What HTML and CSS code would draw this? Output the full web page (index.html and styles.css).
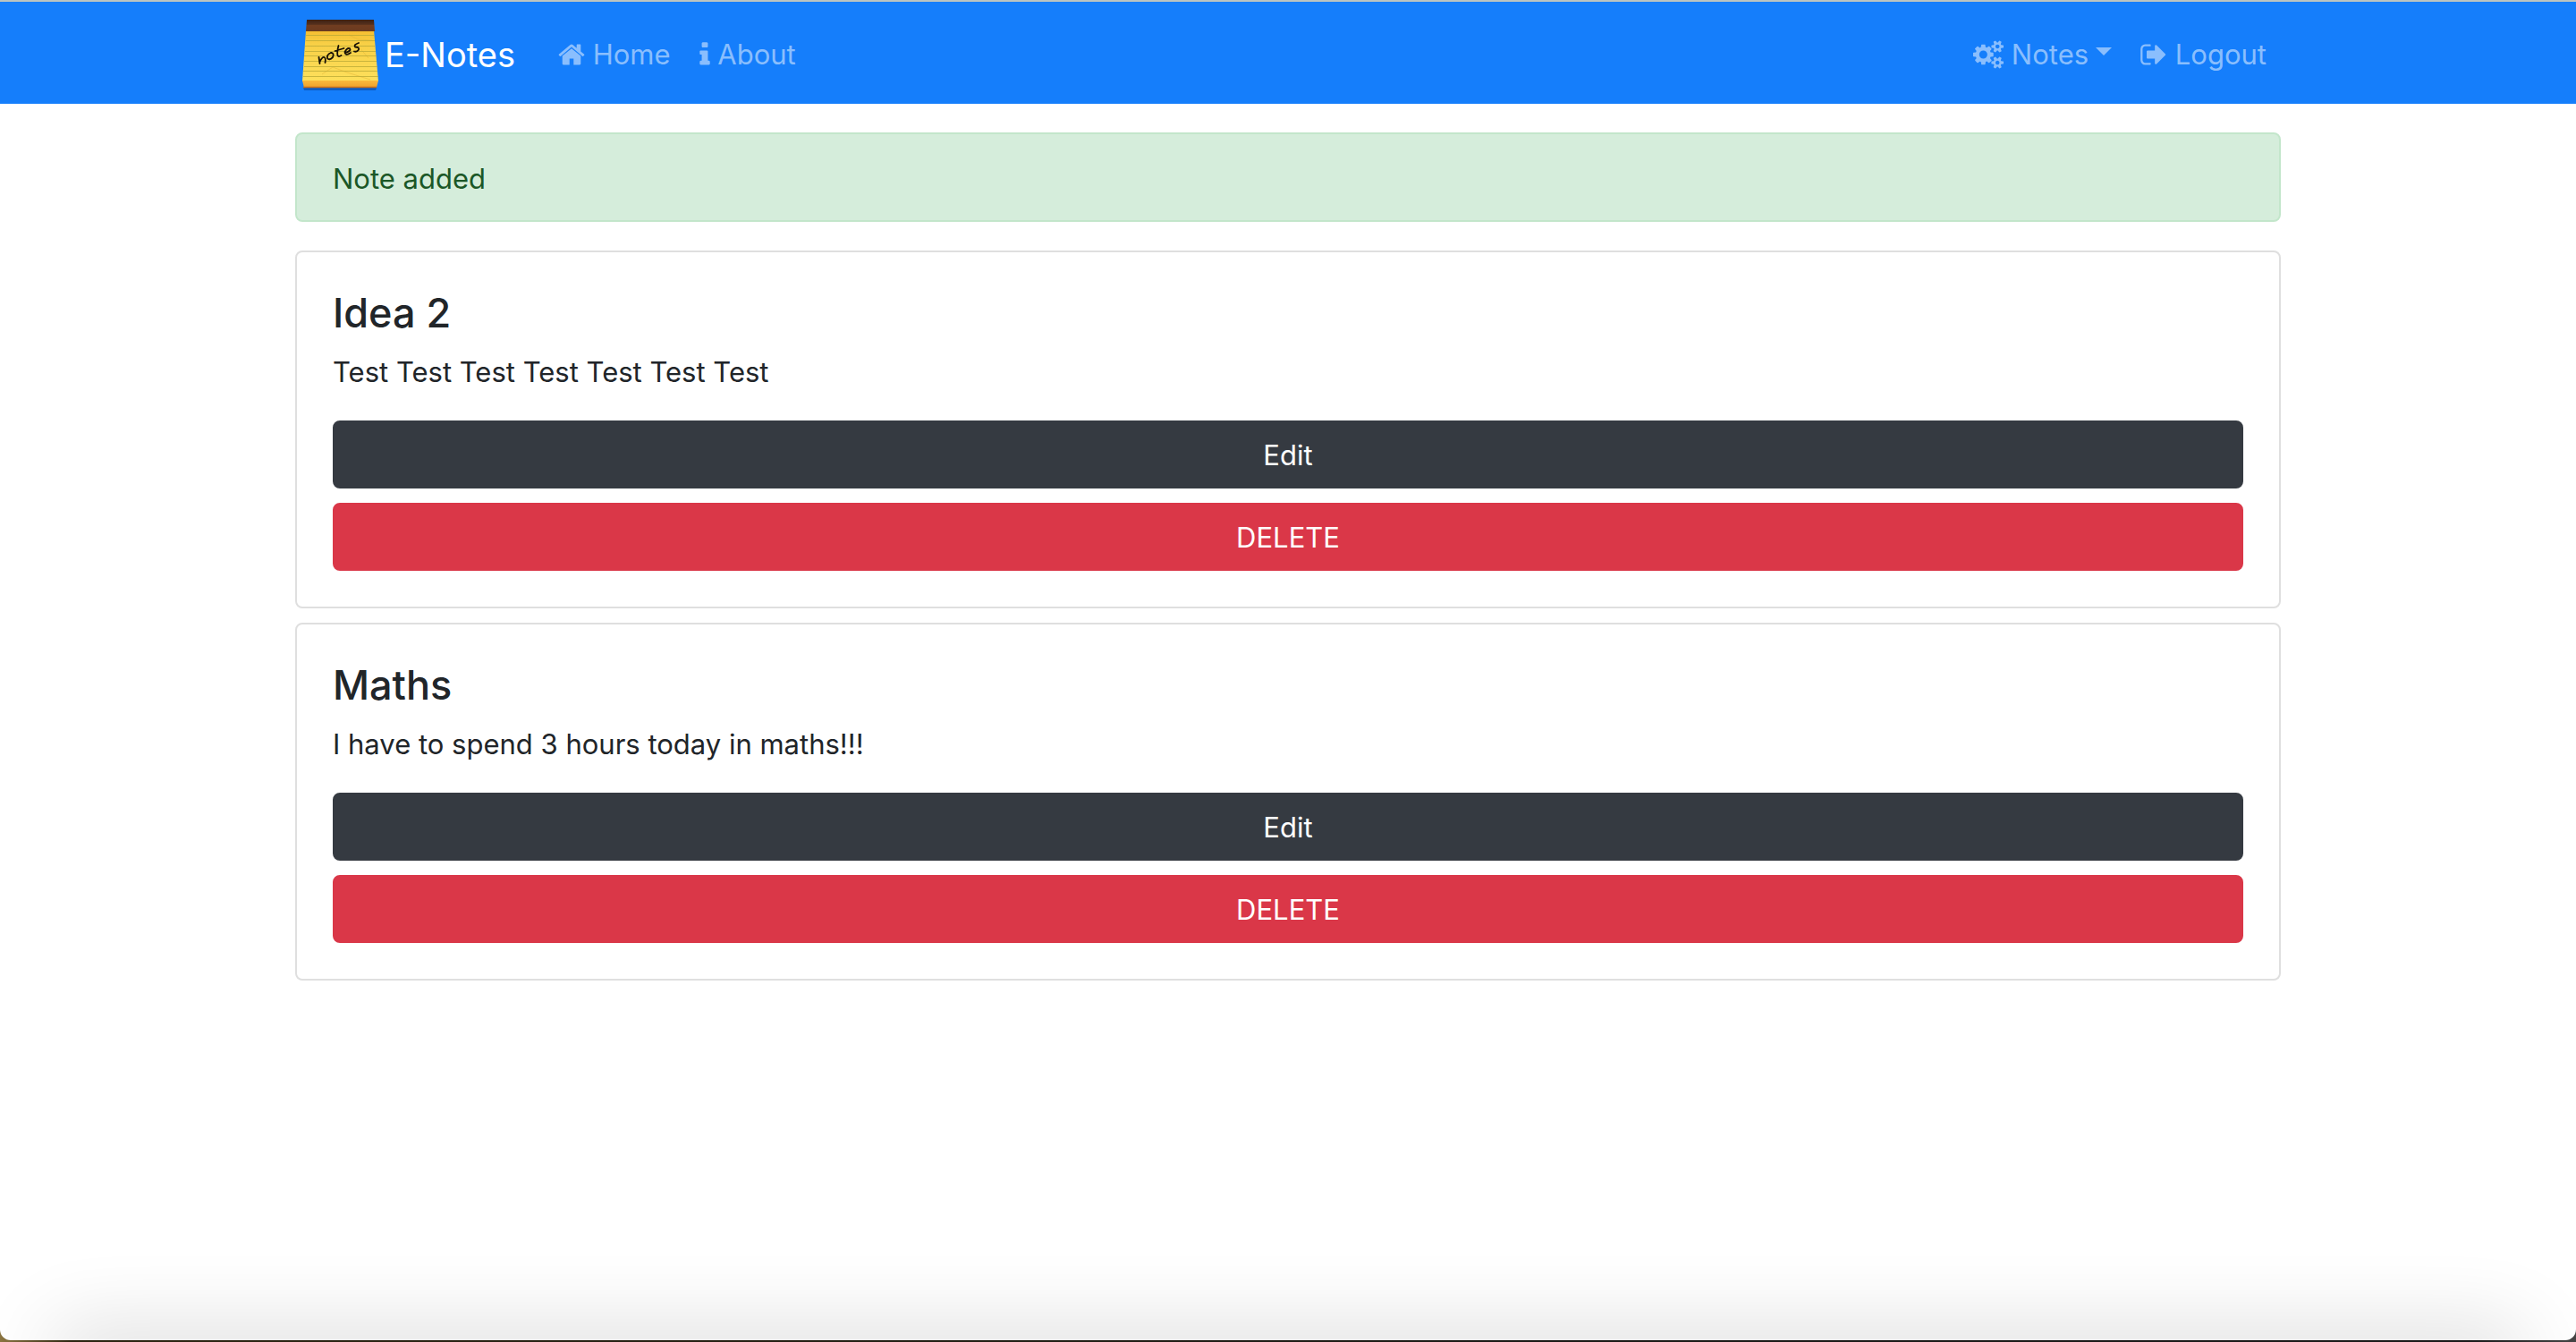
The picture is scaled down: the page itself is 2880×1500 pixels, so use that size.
FILE: index.html
```html
<!DOCTYPE html>
<html lang="en">
<head>
<meta charset="utf-8">
<title>E-Notes</title>
<meta name="viewport" content="width=device-width, initial-scale=1">
<link rel="stylesheet" href="styles.css">
</head>
<body>
<div class="window">
  <header class="navbar">
    <nav class="container nav-row" aria-label="Main">
      <a class="brand" href="#">
        <svg class="brand-logo" viewBox="0 0 100 80" aria-hidden="true">
          <defs>
            <linearGradient id="paper" x1="0" y1="0" x2="0" y2="1">
              <stop offset="0" stop-color="#f5bd30"/>
              <stop offset=".25" stop-color="#f8cf45"/>
              <stop offset="1" stop-color="#fde05c"/>
            </linearGradient>
            <linearGradient id="binding" x1="0" y1="0" x2="0" y2="1">
              <stop offset="0" stop-color="#3a2015"/>
              <stop offset=".4" stop-color="#56301b"/>
              <stop offset=".5" stop-color="#713d20"/>
              <stop offset="1" stop-color="#6a3a20"/>
            </linearGradient>
            <linearGradient id="pad" x1="0" y1="0" x2="0" y2="1">
              <stop offset="0" stop-color="#f9b93c"/>
              <stop offset="1" stop-color="#eda02b"/>
            </linearGradient>
          </defs>
          <path d="M9 77h82l-1 3H10z" fill="#0a4fa8" opacity=".7"/>
          <path d="M12 13h76l5 57H8z" fill="url(#paper)"/>
          <path d="M60 18l10 5 16 1M30 62l12-8 16 6 26 8M70 30l12 14" fill="none" stroke="#e3b436" stroke-width="1" opacity=".5"/>
          <path d="M12 18.500h76M12 24.500h77M11 30.500h78M11 36.500h79M10 41.500h81M10 47.500h81M10 53.500h82M9 58.500h83M9 64.500h84" stroke="#b9a936" stroke-width="1" opacity=".75"/>
          <path d="M8 69h85l-2 8H10z" fill="url(#pad)"/>
          <path d="M9 76.500h82" stroke="#c8701c" stroke-width="1.500"/>
          <path d="M13 1h75l1 13H12z" fill="url(#binding)"/>
          <g fill="none" stroke="#171005" stroke-width="1.800" stroke-linecap="round" stroke-linejoin="round">
            <path d="M26.500 43l1 7M27.500 48q3-6 5-5 2 1 1 6"/>
            <path d="M40 38q-5 2-4 6 2 3 6-1 2-5-2-5"/>
            <path d="M48.500 30q-2 7-1 11 1 2 4 0M44.500 36l10-3"/>
            <path d="M56 38q7-2 5-5-3-1-5.500 4 .5 5 6.500 1"/>
            <path d="M71 27q-6 2-4 4.500 5 0 4 3-2 3-5 2"/>
          </g>
        </svg>E-Notes</a>
      <ul class="nav-list">
        <li><a class="nav-link" href="#"><svg class="icon icon-30" viewBox="64 0 1664 1792" aria-hidden="true"><path d="M1472 992v480q0 26-19 45t-45 19h-384v-384h-256v384h-384q-26 0-45-19t-19-45v-480q0-1 .5-3t.5-3l575-474 575 474q1 2 1 6zm223-69l-62 74q-8 9-21 11h-3q-13 0-21-7l-692-577-692 577q-12 8-24 7-13-2-21-11l-62-74q-8-10-7-23.500t11-21.500l719-599q32-26 76-26t76 26l244 204v-195q0-14 9-23t23-9h192q14 0 23 9t9 23v408l219 182q10 8 11 21.500t-7 23.500z"/></svg> Home</a></li>
        <li><a class="nav-link" href="#"><svg class="icon icon-12" viewBox="576 0 640 1792" aria-hidden="true"><path d="M1216 1344v128q0 26-19 45t-45 19h-512q-26 0-45-19t-19-45v-128q0-26 19-45t45-19h64v-384h-64q-26 0-45-19t-19-45v-128q0-26 19-45t45-19h384q26 0 45 19t19 45v576h64q26 0 45 19t19 45zm-128-1152v192q0 26-19 45t-45 19h-256q-26 0-45-19t-19-45v-192q0-26 19-45t45-19h256q26 0 45 19t19 45z"/></svg> About</a></li>
      </ul>
      <ul class="nav-list nav-end">
        <li><a class="nav-link nav-dropdown" href="#" aria-haspopup="true"><svg class="icon icon-34" viewBox="-64 0 1920 1792" aria-hidden="true"><path d="M832 896q0-106-75-181t-181-75-181 75-75 181 75 181 181 75 181-75 75-181zm768 512q0-52-38-90t-90-38-90 38-38 90q0 53 37.500 90.500t90.500 37.500 90.500-37.500 37.500-90.500zm0-1024q0-52-38-90t-90-38-90 38-38 90q0 53 37.500 90.500t90.500 37.500 90.500-37.500 37.500-90.500zm-384 421v185q0 10-7 19.500t-16 10.500l-155 24q-11 35-32 76 34 48 90 115 7 11 7 20 0 12-7 19-23 30-82.500 89.500t-78.500 59.500q-11 0-21-7l-115-90q-37 19-77 31-11 108-23 155-7 24-30 24h-186q-11 0-20-7.500t-10-17.500l-23-153q-34-10-75-31l-118 89q-7 7-20 7-11 0-21-8-144-133-144-160 0-9 7-19 10-14 41-53t47-61q-23-44-35-82l-152-24q-10-1-17-9.500t-7-19.500v-185q0-10 7-19.500t16-10.500l155-24q11-35 32-76-34-48-90-115-7-11-7-20 0-12 7-20 22-30 82-89t79-59q11 0 21 7l115 90q34-18 77-32 11-108 23-154 7-24 30-24h186q11 0 20 7.500t10 17.500l23 153q34 10 75 31l118-89q8-7 20-7 11 0 21 8 144 133 144 160 0 8-7 19-12 16-42 54t-45 60q23 48 34 82l152 23q10 2 17 10.500t7 19.500zm640 533v140q0 16-149 31-12 27-30 52 51 113 51 138 0 4-4 7-122 71-124 71-8 0-46-47t-52-68q-20 2-30 2t-30-2q-14 21-52 68t-46 47q-2 0-124-71-4-3-4-7 0-25 51-138-18-25-30-52-149-15-149-31v-140q0-16 149-31 13-29 30-52-51-113-51-138 0-4 4-7 4-2 35-20t59-34 30-16q8 0 46 46.500t52 67.500q20-2 30-2t30 2q51-71 92-112l6-2q4 0 124 70 4 3 4 7 0 25-51 138 17 23 30 52 149 15 149 31zm0-1024v140q0 16-149 31-12 27-30 52 51 113 51 138 0 4-4 7-122 71-124 71-8 0-46-47t-52-68q-20 2-30 2t-30-2q-14 21-52 68t-46 47q-2 0-124-71-4-3-4-7 0-25 51-138-18-25-30-52-149-15-149-31v-140q0-16 149-31 13-29 30-52-51-113-51-138 0-4 4-7 4-2 35-20t59-34 30-16q8 0 46 46.500t52 67.500q20-2 30-2t30 2q51-71 92-112l6-2q4 0 124 70 4 3 4 7 0 25-51 138 17 23 30 52 149 15 149 31z"/></svg> Notes</a></li>
        <li><a class="nav-link" href="#"><svg class="icon icon-30" viewBox="64 0 1664 1792" aria-hidden="true"><path d="M704 1440q0 4 1 20t.5 26.500-3 23.500-10 19.500-20.500 6.500h-320q-119 0-203.500-84.500t-84.500-203.500v-704q0-119 84.500-203.500t203.500-84.500h320q13 0 22.500 9.500t9.500 22.500q0 4 1 20t.5 26.500-3 23.500-10 19.500-20.500 6.500h-320q-66 0-113 47t-47 113v704q0 66 47 113t113 47h312l11.500 1 11.500 3 8 5.500 7 9 2 13.500zm928-544q0 26-19 45l-544 544q-19 19-45 19t-45-19-19-45v-288h-448q-26 0-45-19t-19-45v-384q0-26 19-45t45-19h448v-288q0-26 19-45t45-19 45 19l544 544q19 19 19 45z"/></svg> Logout</a></li>
      </ul>
    </nav>
  </header>

  <main class="container">
    <div class="alert" role="alert">Note added</div>

    <article class="card">
      <h2 class="card-title">Idea 2</h2>
      <p class="card-text">Test Test Test Test Test Test Test</p>
      <div class="card-actions">
        <button class="btn btn-dark" type="button">Edit</button>
        <button class="btn btn-danger" type="button">DELETE</button>
      </div>
    </article>

    <article class="card">
      <h2 class="card-title">Maths</h2>
      <p class="card-text">I have to spend 3 hours today in maths!!!</p>
      <div class="card-actions">
        <button class="btn btn-dark" type="button">Edit</button>
        <button class="btn btn-danger" type="button">DELETE</button>
      </div>
    </article>
  </main>
  <div class="dock-shadow" aria-hidden="true"></div>
</div>
</body>
</html>
```
FILE: styles.css
```css
*,
*::before,
*::after {
  box-sizing: border-box;
}

html {
  background: linear-gradient(90deg, #8a7440 0, #2c2410 80px, #1a1a16 60%, #1a1a1a 96%, #444 100%);
}

body {
  margin: 0;
  padding-bottom: 2px;
  min-height: 100vh;
  display: flex;
  font-family: Inter, "Liberation Sans", sans-serif;
  font-size: 31px;
  line-height: 48px;
  color: #212529;
}

.window {
  position: relative;
  flex: 1;
  min-width: 0;
  overflow: hidden;
  border-top: 2px solid #bcc4c0;
  border-radius: 0 0 12px 12px;
  background: #fff;
}

.container {
  width: 100%;
  max-width: 2280px;
  margin: 0 auto;
  padding: 0 30px;
}

/* Navigation */
.navbar {
  background: #157efb;
}

.nav-row {
  display: flex;
  align-items: center;
  padding-top: 18px;
  padding-bottom: 14px;
}

.brand {
  display: flex;
  align-items: center;
  height: 82px;
  margin-right: 32px;
  font-size: 38px;
  color: #fff;
  text-decoration: none;
  white-space: nowrap;
}

.brand-logo {
  width: 100px;
  height: 80px;
}

.nav-list {
  display: flex;
  margin: 0;
  padding: 0;
  list-style: none;
}

.nav-end {
  margin-left: auto;
}

.nav-link {
  display: block;
  padding: 16px;
  color: #8abefd;
  text-decoration: none;
  white-space: nowrap;
}

.nav-dropdown::after {
  content: "";
  display: inline-block;
  margin-left: 8px;
  vertical-align: 10px;
  border: 9px solid transparent;
  border-top-color: currentColor;
  border-bottom: 0;
}

.icon {
  height: 32px;
  vertical-align: -5px;
  fill: currentColor;
}

.icon-12 {
  width: 12px;
}

.icon-30 {
  width: 30px;
}

.icon-34 {
  width: 34px;
}

/* Messages */
.alert {
  margin: 32px 0;
  padding: 26px 40px 22px;
  border: 2px solid #c3e6cb;
  border-radius: 8px;
  background: #d5eddb;
  color: #1b5727;
}

/* Notes */
.card {
  margin-bottom: 16px;
  padding: 42px 40px 40px;
  border: 2px solid #dfdfdf;
  border-radius: 8px;
  background: #fff;
}

.card-title {
  margin: 0 0 16px;
  font-size: 45px;
  font-weight: 500;
  line-height: 52px;
}

.card-text {
  margin: 0 0 30px;
}

.card-actions {
  display: grid;
  gap: 16px;
}

.btn {
  padding: 13px 24px 11px;
  border: 2px solid transparent;
  border-radius: 8px;
  font: inherit;
  color: #fff;
  cursor: pointer;
}

.btn-dark {
  border-color: #353a41;
  background: #353a41;
}

.btn-danger {
  border-color: #da3748;
  background: #da3748;
}

/* Soft shade rising from the lower edge of the window */
.dock-shadow {
  position: absolute;
  left: 70px;
  right: 70px;
  bottom: -40px;
  height: 40px;
  box-shadow: 0 0 90px 10px rgba(0, 0, 0, 0.16);
  pointer-events: none;
}
```
